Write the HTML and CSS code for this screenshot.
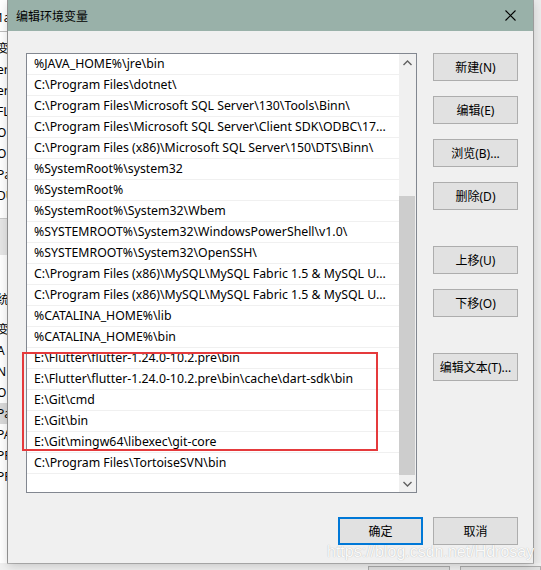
FILE: index.html
```html
<html>
    <head>
        <meta charset="utf-8" />
        <title>编辑环境变量</title>
        <link rel="stylesheet" href="styles.css">
    </head>
    <body>
        <!-- 后面的“环境变量”窗口，只露出左右两条边 -->
        <div class="back">
            <div class="back-left">
                <div class="bl-row bl-top">1a</div>
                <div class="bl-row bl-head">变</div>
                <div class="bl-row">er</div>
                <div class="bl-row">er</div>
                <div class="bl-row">FL</div>
                <div class="bl-row">O</div>
                <div class="bl-row">O</div>
                <div class="bl-row">Pa</div>
                <div class="bl-row">DU</div>
                <div class="bl-band"></div>
                <div class="bl-row bl-group">统</div>
                <div class="bl-row bl-head2">变</div>
                <div class="bl-row">A</div>
                <div class="bl-row">N</div>
                <div class="bl-row">O</div>
                <div class="bl-row bl-sel">Pa</div>
                <div class="bl-row">PA</div>
                <div class="bl-row">PF</div>
                <div class="bl-row">PF</div>
            </div>
            <div class="back-right"></div>
            <div class="back-bottom">
                <span class="bb-btn"></span>
                <span class="bb-btn"></span>
            </div>
        </div>

        <div class="dialog">
            <div class="titlebar">
                <span class="title">编辑环境变量</span>
                <span class="close">
                    <svg width="11" height="11" viewBox="0 0 11 11">
                        <path d="M0.5 0.5L10.5 10.5M10.5 0.5L0.5 10.5" stroke="#000" stroke-width="1.1" fill="none"/>
                    </svg>
                </span>
            </div>
            <div class="content">
                <div class="listbox">
                    <ul class="paths">
                        <li>%JAVA_HOME%\jre\bin</li>
                        <li>C:\Program Files\dotnet\</li>
                        <li>C:\Program Files\Microsoft SQL Server\130\Tools\Binn\</li>
                        <li>C:\Program Files\Microsoft SQL Server\Client SDK\ODBC\17...</li>
                        <li>C:\Program Files (x86)\Microsoft SQL Server\150\DTS\Binn\</li>
                        <li>%SystemRoot%\system32</li>
                        <li>%SystemRoot%</li>
                        <li>%SystemRoot%\System32\Wbem</li>
                        <li>%SYSTEMROOT%\System32\WindowsPowerShell\v1.0\</li>
                        <li>%SYSTEMROOT%\System32\OpenSSH\</li>
                        <li>C:\Program Files (x86)\MySQL\MySQL Fabric 1.5 &amp; MySQL U...</li>
                        <li>C:\Program Files (x86)\MySQL\MySQL Fabric 1.5 &amp; MySQL U...</li>
                        <li>%CATALINA_HOME%\lib</li>
                        <li>%CATALINA_HOME%\bin</li>
                        <li>E:\Flutter\flutter-1.24.0-10.2.pre\bin</li>
                        <li>E:\Flutter\flutter-1.24.0-10.2.pre\bin\cache\dart-sdk\bin</li>
                        <li>E:\Git\cmd</li>
                        <li>E:\Git\bin</li>
                        <li>E:\Git\mingw64\libexec\git-core</li>
                        <li>C:\Program Files\TortoiseSVN\bin</li>
                    </ul>
                    <div class="vscroll">
                        <div class="arrow">
                            <svg width="9" height="6" viewBox="0 0 9 6"><path d="M0.5 5L4.5 1L8.5 5" stroke="#606060" stroke-width="1.4" fill="none"/></svg>
                        </div>
                        <div class="track"><div class="thumb"></div></div>
                        <div class="arrow">
                            <svg width="9" height="6" viewBox="0 0 9 6"><path d="M0.5 1L4.5 5L8.5 1" stroke="#606060" stroke-width="1.4" fill="none"/></svg>
                        </div>
                    </div>
                </div>
                <div class="side">
                    <button class="btn">新建(N)</button>
                    <button class="btn gap-s">编辑(E)</button>
                    <button class="btn gap-s">浏览(B)...</button>
                    <button class="btn gap-s">删除(D)</button>
                    <button class="btn gap-l">上移(U)</button>
                    <button class="btn gap-s">下移(O)</button>
                    <button class="btn gap-l">编辑文本(T)...</button>
                </div>
            </div>
            <div class="footer">
                <button class="btn btn-ok">确定</button>
                <button class="btn">取消</button>
            </div>
        </div>

        <!-- 红框标注 -->
        <div class="mark"></div>
        <div class="watermark">https://blog.csdn.net/Hdrosay</div>
    </body>
</html>
```

FILE: styles.css
```css
body {
    margin: 0;
    width: 541px;
    height: 570px;
    overflow: hidden;
    position: relative;
    background: #fff;
    font-family: "Noto Sans", "Noto Sans CJK SC", sans-serif;
    font-size: 12px;
    color: #000;
}

/* 后面的窗口 */
.back {
    position: absolute;
    left: 0;
    top: 0;
    width: 541px;
    height: 570px;
    background: #f0f0f0;
}
.back-left {
    width: 8px;
    height: 570px;
    overflow: hidden;
    background: #fff;
    border-right: 1px solid #c8c8c8;
    box-sizing: border-box;
}
.bl-row {
    height: 21px;
    line-height: 21px;
    margin-left: -3px;
    white-space: nowrap;
}
.bl-top {
    margin-top: 7px;
    border-bottom: 1px solid #bdbdbd;
    height: 24px;
    line-height: 22px;
}
.bl-head {
    margin-top: 6px;
}
.bl-band {
    height: 36px;
    margin-top: 12px;
    background: #e6e6e6;
    border-top: 1px solid #c8c8c8;
}
.bl-group {
    margin-top: 34px;
}
.bl-head2 {
    margin-top: 9px;
}
.bl-sel {
    background: #d9d9d9;
}
.back-right {
    position: absolute;
    right: 0;
    top: 0;
    width: 8px;
    height: 570px;
    background: #ececec;
    border-left: 1px solid #dadada;
    box-sizing: border-box;
}
.back-bottom {
    position: absolute;
    left: 0;
    bottom: 0;
    width: 541px;
    height: 7px;
    background: #f0f0f0;
    display: flex;
    gap: 10px;
    padding-left: 368px;
    box-sizing: border-box;
}
.bb-btn {
    width: 85px;
    height: 10px;
    margin-top: 3px;
    border: 1px solid #adadad;
    background: #e1e1e1;
}

/* 编辑对话框 */
.dialog {
    position: absolute;
    left: 8px;
    top: 0;
    width: 525px;
    height: 563px;
    background: #f0f0f0;
    box-shadow: 0 0 0 1px rgba(0, 0, 0, 0.22), 0 3px 10px rgba(0, 0, 0, 0.18);
}
.titlebar {
    height: 31px;
    background: #99b1a9;
    display: flex;
    align-items: center;
    padding-left: 8px;
}
.title {
    flex: 1;
    font-size: 12px;
}
.close {
    width: 46px;
    height: 31px;
    display: flex;
    align-items: center;
    justify-content: center;
}
.content {
    display: flex;
    gap: 16px;
    padding: 22px 15px 0 18px;
}

/* 路径列表 */
.listbox {
    width: 391px;
    height: 440px;
    border: 1px solid #828790;
    background: #fff;
    box-sizing: border-box;
    display: flex;
}
.paths {
    flex: 1;
    list-style-type: none;
    margin: 0;
    padding: 0;
    overflow: hidden;
    font-size: 12.3px;
}
.paths li {
    height: 20px;
    line-height: 20px;
    padding-left: 7px;
    border-bottom: 1px solid #f0f0f0;
    white-space: nowrap;
    overflow: hidden;
}
.vscroll {
    width: 17px;
    background: #f0f0f0;
    display: flex;
    flex-direction: column;
}
.arrow {
    height: 17px;
    display: flex;
    align-items: center;
    justify-content: center;
}
.track {
    flex: 1;
    display: flex;
    flex-direction: column;
}
.thumb {
    flex: 1;
    margin: 125px 1px 0 0;
    background: #cdcdcd;
}

/* 按钮 */
.side {
    width: 85px;
    display: flex;
    flex-direction: column;
}
.btn {
    width: 85px;
    height: 28px;
    padding: 0;
    border: 1px solid #adadad;
    background: #e1e1e1;
    font-family: "Noto Sans", "Noto Sans CJK SC", sans-serif;
    font-size: 12px;
    color: #000;
    box-sizing: border-box;
}
.gap-s {
    margin-top: 15px;
}
.gap-l {
    margin-top: 36px;
}
.footer {
    display: flex;
    justify-content: flex-end;
    gap: 10px;
    padding-right: 15px;
    margin-top: 24px;
}
.btn-ok {
    border: 2px solid #0078d7;
}

.mark {
    position: absolute;
    left: 22px;
    top: 352px;
    width: 356px;
    height: 99px;
    border: 2px solid #e53a3c;
    box-sizing: border-box;
}
.watermark {
    position: absolute;
    left: 327px;
    top: 543px;
    font-family: "Liberation Sans", sans-serif;
    font-size: 16px;
    color: rgba(255, 255, 255, 0.95);
    text-shadow: 0 0 1px rgba(0, 0, 0, 0.3);
    white-space: nowrap;
}
```
